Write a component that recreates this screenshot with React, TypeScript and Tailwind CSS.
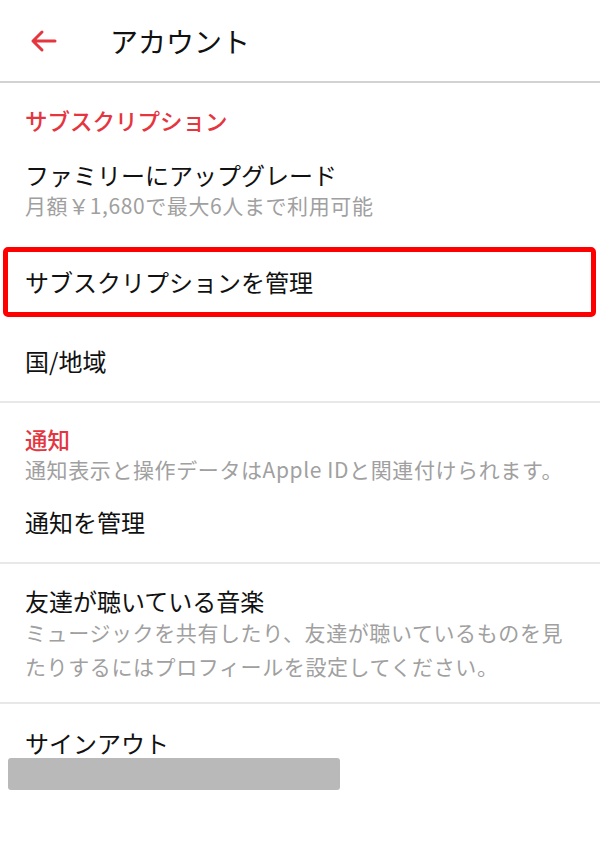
const RED = "text-[#e5353f]";

function BackArrow() {
  return (
    <svg width="28" height="24" viewBox="0 0 28 24" fill="none" className="text-[#e5353f]">
      <path d="M26 12H4M13 3L4 12l9 9" stroke="currentColor" strokeWidth="3" strokeLinecap="round" strokeLinejoin="round" />
    </svg>
  );
}

export default function App() {
  return (
    <div
      className="w-[600px] h-[848px] bg-white text-[#111] overflow-hidden"
      style={{ fontFamily: '"Noto Sans CJK JP", "Noto Sans", sans-serif' }}
    >
      {/* ヘッダー */}
      <div className="h-[83px] flex items-center border-b-2 border-[#d2d2d2]">
        <div className="ml-[29px] w-[81px] flex items-center">
          <BackArrow />
        </div>
        <div className="text-[28px] leading-[34px]">アカウント</div>
      </div>

      {/* サブスクリプション */}
      <div className="border-b-2 border-[#e8e8e8] pb-[24px]">
        <div className={`${RED} text-[22.5px] leading-[30px] font-medium px-[25px] pt-[22px]`}>サブスクリプション</div>
        <div className="px-[25px] mt-[24px]">
          <div className="text-[24px] leading-[31px]">ファミリーにアップグレード</div>
          <div className="text-[21px] leading-[30px] tracking-[0.6px] text-[#a0a0a0]">月額￥1,680で最大6人まで利用可能</div>
        </div>
        <div className="mt-[27px] mx-[3px] mr-[4px] h-[70px] border-[5px] border-[#ff0000] rounded-[5px] flex items-center pl-[17px]">
          <span className="text-[24px] leading-[32px]">サブスクリプションを管理</span>
        </div>
        <div className="px-[25px] mt-[28px] text-[24px] leading-[32px]">国/地域</div>
      </div>

      {/* 通知 */}
      <div className="border-b-2 border-[#e8e8e8] pb-[24px]">
        <div className={`${RED} text-[22.5px] leading-[30px] font-medium px-[25px] pt-[21px]`}>通知</div>
        <div className="px-[25px] text-[21px] leading-[30px] tracking-[0.6px] text-[#a0a0a0]">通知表示と操作データはApple IDと関連付けられます。</div>
        <div className="px-[25px] mt-[22px] text-[24px] leading-[32px]">通知を管理</div>
      </div>

      {/* 友達 */}
      <div className="border-b-2 border-[#e8e8e8] pb-[19px]">
        <div className="px-[25px] pt-[22px] text-[24px] leading-[29px]">友達が聴いている音楽</div>
        <div className="pl-[25px] pr-[30px] text-[21px] leading-[34px] tracking-[0.6px] text-[#a0a0a0]">
          ミュージックを共有したり、友達が聴いているものを見たりするにはプロフィールを設定してください。
        </div>
      </div>

      {/* サインアウト */}
      <div className="pt-[24px]">
        <div className="px-[25px] text-[24px] leading-[30px]">サインアウト</div>
        <div className="ml-[8px] w-[332px] h-[32px] bg-[#b9b9b9] rounded-[3px]" />
      </div>
    </div>
  );
}
